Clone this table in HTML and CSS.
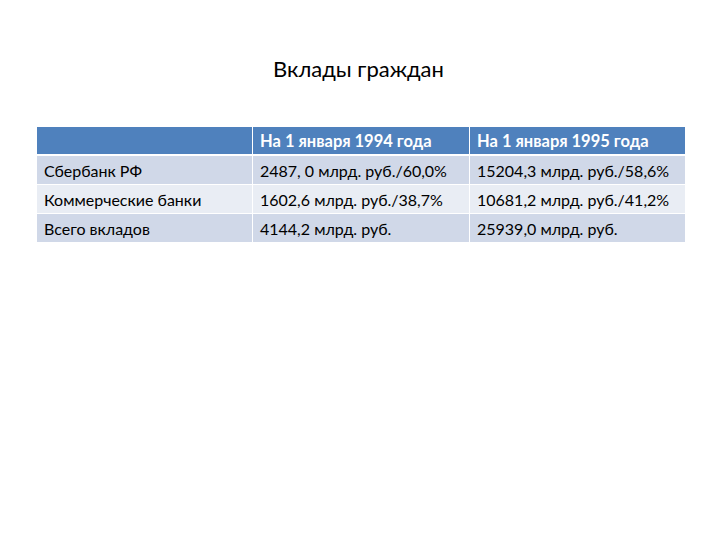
FILE: index.html
```html
<!DOCTYPE html>
<html lang="ru">
<head>
<meta charset="utf-8">
<link rel="stylesheet" href="styles.css">
<title>Вклады граждан</title>
</head>
<body>
<div class="slide">
  <h1 class="title">Вклады граждан</h1>
  <table class="deposits">
    <thead>
      <tr>
        <th></th>
        <th>На 1 января 1994 года</th>
        <th>На 1 января 1995 года</th>
      </tr>
    </thead>
    <tbody>
      <tr class="odd">
        <td>Сбербанк РФ</td>
        <td>2487, 0 млрд. руб./60,0%</td>
        <td>15204,3 млрд. руб./58,6%</td>
      </tr>
      <tr class="even">
        <td>Коммерческие банки</td>
        <td>1602,6 млрд. руб./38,7%</td>
        <td>10681,2 млрд. руб./41,2%</td>
      </tr>
      <tr class="odd">
        <td>Всего вкладов</td>
        <td>4144,2 млрд. руб.</td>
        <td>25939,0 млрд. руб.</td>
      </tr>
    </tbody>
  </table>
</div>
</body>
</html>
```
FILE: styles.css
```css
html, body {
  margin: 0;
  padding: 0;
  background: #ffffff;
}
.slide {
  width: 720px;
  height: 540px;
  padding-top: 55px;
  box-sizing: border-box;
  font-family: Lato, "Liberation Sans", sans-serif;
}
.title {
  margin: 0 0 45px 0;
  padding-right: 3px;
  text-align: center;
  font-weight: normal;
  font-size: 22px;
  line-height: 27px;
  color: #000;
}
.deposits {
  margin-left: 37px;
  border-collapse: separate;
  border-spacing: 0;
  table-layout: fixed;
  width: 648px;
}
.deposits th, .deposits td {
  padding: 0 0 0 7px;
  text-align: left;
  font-size: 16px;
  white-space: nowrap;
  border-right: 1px solid #fff;
  border-bottom: 1px solid #fff;
}
.deposits th:last-child, .deposits td:last-child { border-right: 0; }
.deposits th:nth-child(1), .deposits td:nth-child(1) { width: 208px; }
.deposits th:nth-child(2), .deposits td:nth-child(2) { width: 209px; }
.deposits th {
  background: #4f81bd;
  color: #fff;
  font-weight: bold;
  font-size: 16.5px;
  height: 27px;
  border-bottom: 2px solid #fff;
}
.deposits td {
  color: #000;
  height: 28px;
}
.deposits tr.odd td { background: #d0d8e8; }
.deposits tr.even td { background: #e9edf4; }
```
